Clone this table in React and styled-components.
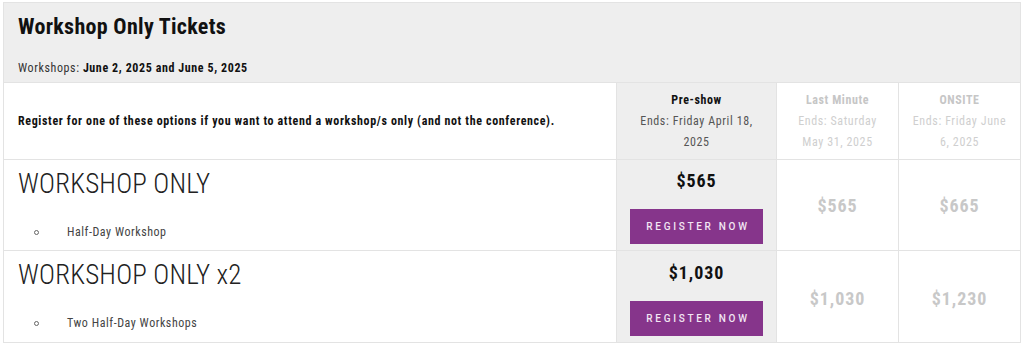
import React from "react";
import styled, { createGlobalStyle } from "styled-components";

const Global = createGlobalStyle`
  body {
    margin: 0;
    background: #fff;
    font-family: Roboto, "Liberation Sans", sans-serif;
    font-stretch: 75%;
    color: #222;
  }
`;

const Panel = styled.section`
  margin: 2px 0 0 3px;
  width: 1018px;
  border: 1px solid #e3e3e3;
  box-sizing: border-box;
`;

const Header = styled.header`
  background: #eeeeee;
  height: 80px;
  padding: 10px 14px 0;
  box-sizing: border-box;
  border-bottom: 1px solid #e3e3e3;
`;

const Title = styled.h2`
  margin: 0;
  font-size: 22px;
  font-weight: 700;
  line-height: 28px;
  letter-spacing: 0.3px;
  color: #111;
`;

const Dates = styled.p`
  margin: 18px 0 0;
  font-size: 12px;
  line-height: 18px;
  letter-spacing: 0.6px;
  color: #333;
  b { color: #111; font-weight: 700; }
`;

const Grid = styled.div`
  display: grid;
  grid-template-columns: 613px 160px 122px 1fr;
  grid-template-rows: 77px 91px 91px;
`;

const Cell = styled.div`
  box-sizing: border-box;
  border-right: ${p => (p.$last ? "none" : "1px solid #e3e3e3")};
  border-bottom: ${p => (p.$bottom ? "none" : "1px solid #e3e3e3")};
  background: ${p => (p.$active ? "#eeeeee" : "#fff")};
  display: flex;
  flex-direction: column;
  align-items: ${p => (p.$left ? "flex-start" : "center")};
  justify-content: center;
  text-align: ${p => (p.$left ? "left" : "center")};
  padding-top: ${p => p.$shift || 0}px;
`;

const Intro = styled.p`
  margin: 0 0 0 14px;
  font-size: 12px;
  font-weight: 700;
  letter-spacing: 0.64px;
  color: #111;
`;

const TierName = styled.div`
  font-size: 12px;
  font-weight: 700;
  line-height: 21px;
  letter-spacing: 0.6px;
  color: ${p => (p.$muted ? "#c6c6c6" : "#111")};
`;

const TierEnds = styled.div`
  font-size: 12px;
  line-height: 21px;
  letter-spacing: 0.6px;
  color: ${p => (p.$muted ? "#cfcfcf" : "#555")};
  padding: 0 11px;
`;

const Product = styled.div`
  align-self: stretch;
  justify-content: flex-start;
  padding: 7px 0 0 14px;
`;

const ProductName = styled.h3`
  margin: 0;
  font-size: 27px;
  font-weight: 300;
  line-height: 34px;
  color: #222;
  letter-spacing: 0.2px;
`;

const Features = styled.ul`
  margin: 22px 0 0;
  padding: 0 0 0 16px;
  list-style: none;
  font-size: 12px;
  line-height: 18px;
  letter-spacing: 0.55px;
  color: #444;
`;

const Feature = styled.li`
  display: flex;
  align-items: center;
  gap: 28px;

  &::before {
    content: "";
    width: 3px;
    height: 3px;
    border: 1px solid #666;
    border-radius: 50%;
  }
`;

const Price = styled.div`
  font-size: 18px;
  font-weight: 700;
  line-height: 22px;
  letter-spacing: 0.9px;
  color: ${p => (p.$muted ? "#c8c8c8" : "#111")};
`;

const RegisterButton = styled.button`
  margin-top: 17px;
  width: 133px;
  height: 35px;
  background: #86358b;
  border: none;
  color: #f2e6f3;
  font-family: inherit;
  font-stretch: 100%;
  font-size: 10px;
  font-weight: 500;
  letter-spacing: 2.7px;
  text-indent: 3px;
  cursor: pointer;
`;

const tiers = [
  { name: "Pre-show", ends: "Ends: Friday April 18, 2025", active: true },
  { name: "Last Minute", ends: "Ends: Saturday May 31, 2025" },
  { name: "ONSITE", ends: "Ends: Friday June 6, 2025" },
];

const products = [
  { name: "WORKSHOP ONLY", features: ["Half-Day Workshop"], prices: ["$565", "$565", "$665"] },
  { name: "WORKSHOP ONLY x2", features: ["Two Half-Day Workshops"], prices: ["$1,030", "$1,030", "$1,230"] },
];

export default function App() {
  return (
    <>
      <Global />
      <Panel>
        <Header>
          <Title>Workshop Only Tickets</Title>
          <Dates>
            Workshops: <b>June 2, 2025 and June 5, 2025</b>
          </Dates>
        </Header>
        <Grid>
          <Cell $left>
            <Intro>Register for one of these options if you want to attend a workshop/s only (and not the conference).</Intro>
          </Cell>
          {tiers.map((t, i) => (
            <Cell key={t.name} $active={t.active} $last={i === tiers.length - 1}>
              <TierName $muted={!t.active}>{t.name}</TierName>
              <TierEnds $muted={!t.active}>{t.ends}</TierEnds>
            </Cell>
          ))}
          {products.map((p, r) => {
            const bottom = r === products.length - 1;
            return (
              <React.Fragment key={p.name}>
                <Cell as={Product} $left $bottom={bottom}>
                  <ProductName>{p.name}</ProductName>
                  <Features>
                    {p.features.map(f => (
                      <Feature key={f}>{f}</Feature>
                    ))}
                  </Features>
                </Cell>
                {p.prices.map((price, i) => (
                  <Cell
                    key={i}
                    $active={i === 0}
                    $last={i === p.prices.length - 1}
                    $bottom={bottom}
                    $shift={i === 0 ? 3 + r * 2 : 2 + r * 2}
                  >
                    <Price $muted={i !== 0}>{price}</Price>
                    {i === 0 && <RegisterButton>REGISTER NOW</RegisterButton>}
                  </Cell>
                ))}
              </React.Fragment>
            );
          })}
        </Grid>
      </Panel>
    </>
  );
}
